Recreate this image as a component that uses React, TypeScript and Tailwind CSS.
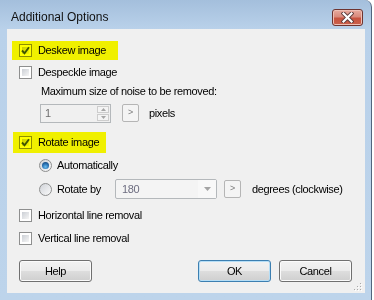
import React from "react";

const font = "font-['Liberation_Sans',Arial,sans-serif]";

function CheckBox({ checked }: { checked?: boolean }) {
  return (
    <span className="relative flex h-[13px] w-[13px] shrink-0 items-center justify-center border border-[#8e8f8f] bg-white">
      <span className="absolute inset-[2px] bg-[linear-gradient(135deg,#cbcfd5,#f6f6f6)]" />
      {checked && (
        <svg className="relative" width="11" height="11" viewBox="0 0 11 11">
          <path d="M2 5.5 L4.5 8.2 L9 2.2" fill="none" stroke="#3f5488" strokeWidth="1.9" />
        </svg>
      )}
    </span>
  );
}

function Radio({ checked }: { checked?: boolean }) {
  return (
    <span className="relative flex h-[13px] w-[13px] shrink-0 items-center justify-center rounded-full border border-[#8e8f8f] bg-[linear-gradient(135deg,#d0d3d8,#fafafa)]">
      {checked && (
        <span className="h-[7px] w-[7px] rounded-full bg-[radial-gradient(circle_at_50%_70%,#6fc1f0_0%,#2a72b4_50%,#0c3764_100%)]" />
      )}
    </span>
  );
}

function Highlight({ className }: { className: string }) {
  return <span className={`pointer-events-none absolute top-0 bottom-0 bg-[#ffff00] mix-blend-multiply ${className}`} />;
}

function SmallButton() {
  return (
    <span className="flex h-[18px] w-[17px] shrink-0 items-center justify-center rounded-[2px] border border-[#b5b5b5] bg-[#f4f4f4] text-[9px] text-[#7a7a7a]">
      &gt;
    </span>
  );
}

function DialogButton({ label, primary }: { label: string; primary?: boolean }) {
  return (
    <button
      className={`h-[22px] w-[73px] rounded-[3px] border bg-[linear-gradient(#f2f2f2_0%,#ebebeb_48%,#dddddd_52%,#cfcfcf_100%)] text-[11px] text-black ${
        primary
          ? "border-[#3c7fb1] shadow-[inset_0_0_0_1px_#b6def6]"
          : "border-[#707070] shadow-[inset_0_0_0_1px_#fbfbfb]"
      }`}
    >
      {label}
    </button>
  );
}

export default function App() {
  return (
    <div className={`h-[300px] w-[374px] overflow-hidden bg-white ${font} tracking-[-0.35px]`}>
      <div className="flex h-[300px] w-[372px] flex-col rounded-tr-[7px] border-r border-[#52667e] bg-[linear-gradient(#a4bfdc_0px,#b9d1ea_29px,#bdd4eb_100%)]">
        {/* Title bar */}
        <div className="flex h-[29px] shrink-0 items-start">
          <span className="pl-[11px] pt-[9px] text-[12px] leading-[16px] tracking-normal text-[#111]">
            Additional Options
          </span>
          <span className="mr-[8px] ml-auto mt-[9px] flex h-[17px] w-[31px] items-center justify-center rounded-[3px] border border-[#6e3430] bg-[linear-gradient(#e8ab9f_0%,#d98a7c_45%,#c8533f_55%,#c9614c_100%)] shadow-[inset_0_0_0_1px_#eebfb5]">
            <svg width="13" height="11" viewBox="0 0 13 11">
              <path d="M2.5 1.5 L10.5 9.5 M10.5 1.5 L2.5 9.5" stroke="#5a3a3a" strokeWidth="4" strokeLinecap="square" />
              <path d="M2.5 1.5 L10.5 9.5 M10.5 1.5 L2.5 9.5" stroke="#ffffff" strokeWidth="2.2" strokeLinecap="square" />
            </svg>
          </span>
        </div>

        {/* Client area */}
        <div className="relative mx-[7px] flex h-[264px] w-[358px] shrink-0 flex-col bg-[#f0f0f0] text-[11px] text-black">
          <div className="relative mt-[12px] flex h-[19px] items-center gap-[6px] pl-[12px]">
            <CheckBox checked />
            <span>Deskew image</span>
            <Highlight className="left-[5px] w-[106px]" />
          </div>

          <div className="mt-[4px] flex h-[16px] items-center gap-[6px] pl-[12px]">
            <CheckBox />
            <span>Despeckle image</span>
          </div>

          <div className="mt-[3px] flex h-[16px] items-center pl-[34px]">Maximum size of noise to be removed:</div>

          <div className="mt-[4px] flex h-[20px] items-center pl-[33px]">
            <div className="flex h-[19px] w-[71px] border border-[#b4b8bb] bg-[#f0f0f0]">
              <span className="flex-1 pl-[4px] leading-[17px] text-[#6d6d6d]">1</span>
              <div className="flex w-[13px] flex-col gap-[1px] p-[1px] pl-0">
                <span className="flex flex-1 items-center justify-center border border-[#cdcdcd] bg-[#f4f4f4]">
                  <svg width="5" height="3" viewBox="0 0 5 3">
                    <path d="M0 3 L2.5 0 L5 3 Z" fill="#a6a6a6" />
                  </svg>
                </span>
                <span className="flex flex-1 items-center justify-center border border-[#cdcdcd] bg-[#f4f4f4]">
                  <svg width="5" height="3" viewBox="0 0 5 3">
                    <path d="M0 0 L2.5 3 L5 0 Z" fill="#a6a6a6" />
                  </svg>
                </span>
              </div>
            </div>
            <span className="ml-[11px]">
              <SmallButton />
            </span>
            <span className="ml-[10px]">pixels</span>
          </div>

          <div className="relative mt-[9px] flex h-[21px] items-center gap-[6px] pl-[12px]">
            <CheckBox checked />
            <span>Rotate image</span>
            <Highlight className="left-[6px] w-[93px]" />
          </div>

          <div className="mt-[4px] flex h-[16px] items-center gap-[5px] pl-[32px]">
            <Radio checked />
            <span>Automatically</span>
          </div>

          <div className="mt-[6px] flex h-[20px] items-center pl-[32px]">
            <Radio />
            <span className="ml-[5px] w-[58px]">Rotate by</span>
            <div className="flex h-[20px] w-[102px] rounded-[2px] border border-[#b4b8bb] bg-[#f4f4f4]">
              <span className="flex-1 pl-[6px] leading-[18px] text-[#6d6d80]">180</span>
              <span className="flex w-[18px] items-center justify-center bg-[#f8f8f8]">
                <svg width="7" height="4" viewBox="0 0 7 4">
                  <path d="M0 0 L3.5 4 L7 0 Z" fill="#a3a3a3" />
                </svg>
              </span>
            </div>
            <span className="ml-[7px]">
              <SmallButton />
            </span>
            <span className="ml-[11px]">degrees (clockwise)</span>
          </div>

          <div className="mt-[8px] flex h-[16px] items-center gap-[6px] pl-[12px]">
            <CheckBox />
            <span>Horizontal line removal</span>
          </div>

          <div className="mt-[7px] flex h-[16px] items-center gap-[6px] pl-[12px]">
            <CheckBox />
            <span>Vertical line removal</span>
          </div>

          <div className="mt-[14px] flex h-[22px] items-center pl-[12px] pr-[13px]">
            <DialogButton label="Help" />
            <span className="ml-auto">
              <DialogButton label="OK" primary />
            </span>
            <span className="ml-[8px]">
              <DialogButton label="Cancel" />
            </span>
          </div>

          {/* resize grip */}
          <svg className="absolute right-[3px] bottom-[2px]" width="8" height="8" viewBox="0 0 8 8">
            {[
              [6, 0],
              [3, 3],
              [6, 3],
              [0, 6],
              [3, 6],
              [6, 6],
            ].map(([x, y]) => (
              <g key={`${x}-${y}`}>
                <rect x={x + 1} y={y + 1} width="1" height="1" fill="#ffffff" />
                <rect x={x} y={y} width="1" height="1" fill="#a9a9a9" />
              </g>
            ))}
          </svg>
        </div>
      </div>
    </div>
  );
}
